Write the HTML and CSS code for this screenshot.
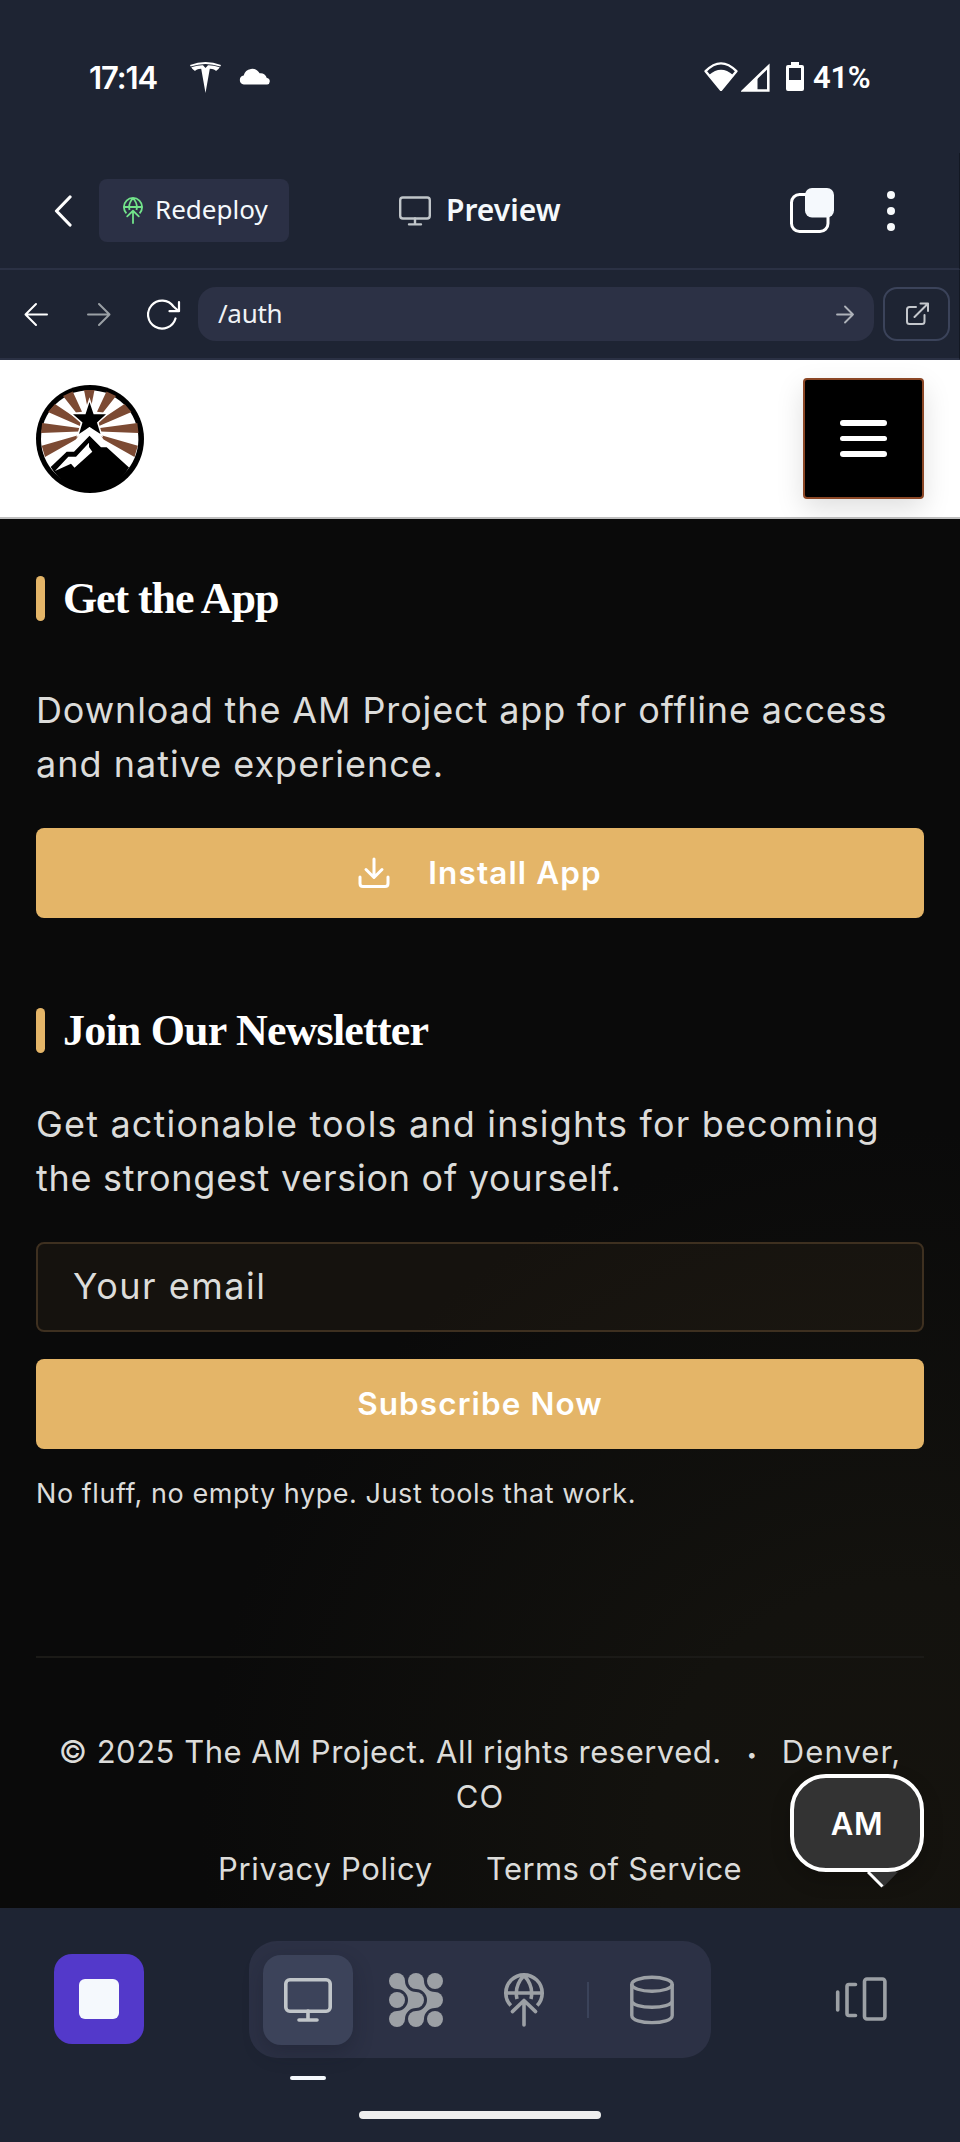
FILE: index.html
```
<!DOCTYPE html>
<html lang="en">
<head>
<meta charset="utf-8">
<title>Preview</title>
<link rel="stylesheet" href="styles.css">
</head>
<body>
<svg width="0" height="0" class="defs" aria-hidden="true">
  <symbol id="globe-up" viewBox="0 0 40 54">
    <g fill="none" stroke="currentColor" stroke-width="3.6" stroke-linecap="round" stroke-linejoin="round">
      <path d="M6.8 32.6A18.2 18.2 0 1 1 33.2 32.6M2.5 20H37.5M20 2.5Q10 13 13 26M20 2.5Q30 13 27 26" stroke-linecap="butt"/>
      <path d="M20 52V27.5M8.4 38.6L20 27.5L31.6 38.6"/>
    </g>
  </symbol>
  <symbol id="monitor" viewBox="0 0 48 44">
    <g fill="none" stroke="currentColor" stroke-linecap="round">
      <rect x="1.8" y="1.8" width="44.4" height="31.4" rx="4"/>
      <path d="M24 33V41M15 42H33"/>
    </g>
  </symbol>
</svg>
<div class="screen">
  <div class="statusbar">
    <div class="status-left">
      <span class="clock">17:14</span>
      <svg class="tesla" width="31" height="31" viewBox="0 0 31 31" fill="#fff"><path d="M0 3Q15.500 -3 31 3L30.300 4.600Q15.500 -.6 .7 4.600Z"/><path d="M1.300 5.300Q8 3 13 3.200L15.500 6L18 3.200Q23 3 29.700 5.300Q28.500 7.800 26 9Q25 7 19.800 6.700L15.500 31L11.200 6.700Q6 7 5 9Q2.500 7.800 1.300 5.300Z"/></svg>
      <svg class="cloud" width="32" height="18" viewBox="0 0 32 18" fill="#fff"><path d="M4.800 17.500A4.600 4.600 0 0 1 4.700 8.400A8.600 8.600 0 0 1 20.600 6.300A6 6 0 0 1 27.800 11A3.300 3.300 0 0 1 28.200 17.500Z"/></svg>
    </div>
    <div class="status-right">
      <svg width="34" height="29" viewBox="0 0 34 29"><path d="M17 28L1.600 9.200Q17 -6.500 32.400 9.200Z" fill="none" stroke="#fff" stroke-width="2.400" stroke-linejoin="round"/><path d="M17 28.500L5 13Q17 2.500 29 13Z" fill="#fff"/></svg>
      <svg class="signal" width="29" height="29" viewBox="0 0 29 29"><path d="M2.500 27.500H27.300V3.500Z" fill="none" stroke="#fff" stroke-width="2.600"/><path d="M2 28L16.500 13.500V28Z" fill="#fff"/></svg>
      <svg class="battery" width="18" height="29" viewBox="0 0 18 29"><path d="M5 0H13V3H16Q18 3 18 5V27Q18 29 16 29H2Q0 29 0 27V5Q0 3 2 3H5Z" fill="#fff"/><rect x="3" y="6" width="12" height="12" fill="#1e2433"/></svg>
      <span class="level">41%</span>
    </div>
  </div>

  <div class="toolbar">
    <svg class="back" width="18" height="32" viewBox="0 0 18 32"><path d="M16 2L2.500 16L16 30" fill="none" stroke="#fff" stroke-width="3.200" stroke-linecap="round" stroke-linejoin="round"/></svg>
    <button class="redeploy"><svg width="20" height="27"><use href="#globe-up"/></svg><span>Redeploy</span></button>
    <div class="title"><svg class="title-icon" width="32" height="30"><use href="#monitor"/></svg><span>Preview</span></div>
    <svg class="tabs" width="45" height="46" viewBox="0 0 45 46"><rect x="1.500" y="6.500" width="36.500" height="37" rx="8" fill="none" stroke="#fff" stroke-width="3"/><rect x="15" y="0" width="29" height="29.500" rx="7" fill="#f5f9fd"/></svg>
    <svg class="dots" width="8" height="40" viewBox="0 0 8 40" fill="#f8fafc"><circle cx="4" cy="4" r="4"/><circle cx="4" cy="20" r="4"/><circle cx="4" cy="36" r="4"/></svg>
  </div>

  <div class="urlbar">
    <svg class="nav-back" width="24" height="25" viewBox="0 0 24 25"><path d="M12 2L1.500 12.500L12 23M1.500 12.500H23" fill="none" stroke="#fff" stroke-width="2"  stroke-linecap="round" stroke-linejoin="round"/></svg>
    <svg class="nav-fwd" width="24" height="25" viewBox="0 0 24 25"><path d="M12 2L22.500 12.500L12 23M1 12.500H22.500" fill="none" stroke="#9aa0a5" stroke-width="2" stroke-linecap="round" stroke-linejoin="round"/></svg>
    <svg class="reload" width="34" height="31" viewBox="0 0 34 31"><path d="M28.500 19.500A14 14 0 1 1 26.500 7.500L31.500 12M32 3V12.200H22.500" fill="none" stroke="#fff" stroke-width="2.200" stroke-linecap="round" stroke-linejoin="round"/></svg>
    <div class="url"><span>/auth</span><svg width="18" height="19" viewBox="0 0 18 19"><path d="M9 1.500L17 9.500L9 17.500M1 9.500H17" fill="none" stroke="#aeb2b9" stroke-width="1.800" stroke-linecap="round" stroke-linejoin="round"/></svg></div>
    <button class="external"><svg width="24" height="24" viewBox="0 0 24 24"><path d="M11 5H4.500Q2 5 2 7.500V19.500Q2 22 4.500 22H17Q19.500 22 19.500 19.500V13M15.500 1.500H23V9M23 1.500L9.500 15" fill="none" stroke="#c4c7cc" stroke-width="2" stroke-linecap="round" stroke-linejoin="round"/></svg></button>
  </div>

  <header class="site-header">
    <svg width="108" height="108" viewBox="0 0 108 108">
      <circle cx="54" cy="54" r="54"/><circle cx="53.700" cy="54" r="48.700" fill="#fff"/>
      <g fill="#7c4a33">
        <path d="M48 5L58.500 5L55.500 20H51Z"/>
        <path d="M27 11L36.700 6.500L46 26.700L40 27.500ZM80 11L70.500 6.500L61 26.700L67 27.500Z"/>
        <path d="M12 27L19 19L45 36.500L44 41ZM95.500 27L88.500 19L62 36.500L63 41Z"/>
        <path d="M5 48L6.200 38L43 43V46.500ZM102.500 48L101.300 38L64 43V46.500Z"/>
        <path d="M9 72L5.700 60.700L43 50L40 54.500ZM98.500 72L101.800 60.700L64.500 50L67.500 54.500Z"/>
      </g>
      <path d="M53.500 17L57.600 29.300H70L61 37.500L64.500 49L53.500 42L43 49L46.500 37.500L37 29.300H49.500Z" stroke="#fff" stroke-width="3" paint-order="stroke"/>
      <path d="M53.500 42L72 59L54 78L35 59Z" fill="#fff"/>
      <path d="M53.500 50.700L65 62.300H70.700L93 82.500Q80 104 54 104Q28 104 14.700 82L30.700 66.700H38Z"/>
      <path d="M53 57.700V62L56.300 66.700L38.500 82.700L35 78.700L19 86L32.300 71.700H40Z" fill="#fff"/>
    </svg>
    <button class="menu" aria-label="Menu"><i></i><i></i><i></i></button>
  </header>

  <main class="page">
    <section class="app">
      <h2 class="heading"><span class="h-app">Get the App</span></h2>
      <p class="copy"><span class="l1">Download the AM Project app for offline access</span><br><span class="l2">and native experience.</span></p>
      <button class="cta install"><svg width="32" height="32" viewBox="0 0 32 32"><path d="M16 2V20M8 12.500L16 20.500L24 12.500M2 20V26.500Q2 29.500 5 29.500H27Q30 29.500 30 26.500V20" fill="none" stroke="#fff" stroke-width="3" stroke-linecap="round" stroke-linejoin="round"/></svg><span>Install App</span></button>
    </section>
    <section class="newsletter">
      <h2 class="heading"><span class="h-news">Join Our Newsletter</span></h2>
      <p class="copy"><span class="l3">Get actionable tools and insights for becoming</span><br><span class="l4">the strongest version of yourself.</span></p>
      <div class="field">Your email</div>
      <button class="cta"><span>Subscribe Now</span></button>
      <p class="note">No fluff, no empty hype. Just tools that work.</p>
    </section>
    <footer class="footer">
      <p class="legal"><span class="copyright">© 2025 The AM Project. All rights reserved.</span><span class="sep">•</span><span class="place">Denver, CO</span></p>
      <div class="links"><a class="privacy">Privacy Policy</a><a class="terms">Terms of Service</a></div>
    </footer>
    <div class="chat"><span>AM</span><svg width="32" height="18" viewBox="0 0 32 18"><path d="M0 0H31L16 15.500Z" fill="#333"/><path d="M1 0L15.500 14.500" stroke="#fff" stroke-width="3"/></svg></div>
  </main>

  <nav class="dock">
    <button class="stop" aria-label="Stop"><i></i></button>
    <div class="pill">
      <div class="tab active"><svg class="tab-monitor" width="48" height="44"><use href="#monitor"/></svg></div>
      <svg class="agent" width="54" height="54" viewBox="0 0 54 54" fill="#9ca0a5">
        <circle cx="8" cy="8" r="8"/><circle cx="27" cy="8" r="8"/><circle cx="46" cy="8" r="8"/>
        <circle cx="8" cy="27" r="8"/><circle cx="27" cy="27" r="8"/><circle cx="46" cy="27" r="8"/>
        <circle cx="8" cy="46" r="8"/><circle cx="27" cy="46" r="8"/><circle cx="46" cy="46" r="8"/>
        <path id="link" d="M16 8A11 11 0 0 0 27 19V27H19A11 11 0 0 0 8 16V8ZM19 27A11 11 0 0 1 8 38V46H16A11 11 0 0 1 27 35V27Z"/>
        <use href="#link" x="19"/>
      </svg>
      <svg class="publish" width="40" height="54"><use href="#globe-up"/></svg>
      <span class="rule"></span>
      <svg class="db" width="44" height="50" viewBox="0 0 44 50" fill="none" stroke="#9ca0a5" stroke-width="3.400"><ellipse cx="22" cy="9.300" rx="20.200" ry="7"/><path d="M1.800 9V40.500C1.800 50 42.200 50 42.200 40.500V9M1.800 25.500C1.800 34.500 42.200 34.500 42.200 25.500"/></svg>
    </div>
    <svg class="devices" width="52" height="44" viewBox="0 0 52 44" fill="none" stroke="#9ca0a5" stroke-width="3.600" stroke-linecap="round"><path d="M2.700 15V33M20.500 7.500H14Q12 7.500 12 9.500V36.500Q12 38.500 14 38.500H20.500"/><rect x="29.500" y="2" width="20.400" height="40" rx="2.500"/></svg>
    <span class="indicator"></span>
    <span class="home"></span>
  </nav>
</div>
</body>
</html>
```
FILE: styles.css
```
* { box-sizing: border-box; }
body { margin: 0; background: #1e2433; font-family: "Inter", sans-serif; }
button { border: 0; padding: 0; margin: 0; font: inherit; color: inherit; background: none; }
svg { display: block; flex: none; }
h2, p { margin: 0; }
.defs { position: absolute; }
.screen { width: 960px; height: 2142px; display: flex; flex-direction: column; background: #1e2433; overflow: hidden; }

.statusbar { height: 153px; display: flex; justify-content: space-between; align-items: flex-start; padding: 62px 89px 0 89px; color: #fff; }
.status-left, .status-right { display: flex; align-items: flex-start; height: 31px; }
.clock, .level { font-size: 31px; line-height: 31px; font-weight: 600; white-space: nowrap; }
.clock { width: 101px; letter-spacing: -1.1px; }
.cloud { margin: 5px 0 0 18px; }
.signal { margin-left: 3px; margin-top: 1px; }
.battery { margin-left: 16px; }
.level { margin-left: 9px; width: 58px; font-family: "Roboto", sans-serif; font-weight: 600; letter-spacing: -0.3px; }

.toolbar { height: 117px; display: flex; align-items: center; border-bottom: 2px solid #2b3144; border-right: 1px solid #131823; padding-left: 54px; }
.redeploy { margin-left: 27px; width: 190px; height: 63px; border-radius: 8px; background: #2b3045; color: #f5f9fc; font: 26px "Noto Sans", sans-serif; display: flex; align-items: center; padding-left: 24px; gap: 12px; }
.redeploy span { padding-bottom: 3px; }
.redeploy svg { color: #72e38a; }
.title { margin-left: 110px; width: 391px; display: flex; align-items: center; gap: 15px; color: #f5f9fc; font: 600 30px "Noto Sans", sans-serif; }
.title-icon { color: #c0c5c9; stroke-width: 3.6; }
.title span { padding-bottom: 2px; }
.dots { margin-left: 52px; }

.urlbar { height: 90px; display: flex; align-items: center; border-bottom: 2px solid #2b3144; border-right: 1px solid #131823; padding-left: 24px; }
.nav-fwd { margin-left: 39px; }
.reload { margin-left: 36px; }
.url { margin-left: 17px; width: 676px; height: 54px; border-radius: 18px; background: #2c3145; display: flex; align-items: center; justify-content: space-between; padding: 0 20px 0 20px; color: #f0f2f5; font: 26px "Noto Sans", sans-serif; }
.url span { padding-bottom: 2px; letter-spacing: -0.3px; }
.external { margin-left: 9px; width: 67px; height: 54px; border: 2px solid #3b435a; border-radius: 14px; display: flex; align-items: center; justify-content: center; }

.site-header { height: 159px; background: #fff; border-bottom: 2px solid #bfbfbf; display: flex; align-items: center; justify-content: space-between; padding: 0 36px; }
.menu { width: 121px; height: 121px; border: 2px solid #8b4726; border-radius: 4px; background: #000; box-shadow: 0 10px 28px rgba(0,0,0,.13); display: flex; flex-direction: column; align-items: center; justify-content: center; gap: 10px; }
.menu i { width: 47px; height: 5.6px; border-radius: 3px; background: #fff; }

.page { position: relative; height: 1389px; padding: 57px 36px 0; color: #dcdcda; background: radial-gradient(ellipse 700px 700px at 900px 1310px, #15130e 0%, #13120e 35%, #0a0a0a 100%) #0a0a0a; }
.heading { height: 45px; display: flex; align-items: center; color: #fff; font: bold 44px/45px "Liberation Serif", serif; white-space: nowrap; }
.heading::before { content: ""; width: 9px; height: 45px; border-radius: 5px; background: #e4b568; margin-right: 18px; }
.h-app { letter-spacing: -1.1px; }
.h-news { letter-spacing: -0.8px; }
.copy { font-size: 36px; line-height: 54px; white-space: nowrap; }
.app .copy { margin-top: 62px; }
.newsletter .copy { margin-top: 44px; }
.l1 { letter-spacing: .88px; }
.l2 { letter-spacing: 1px; }
.l3 { letter-spacing: 1.17px; }
.l4 { letter-spacing: .73px; }
.cta { width: 888px; height: 90px; border-radius: 8px; background: #e4b568; color: #fff; font-size: 31.500px; font-weight: 600; letter-spacing: 1.1px; display: flex; align-items: center; justify-content: center; }
.cta span { padding-bottom: 2px; }
.install { margin-top: 37px; gap: 38px; }
.newsletter { margin-top: 90px; }
.field { margin-top: 37px; height: 90px; border: 2px solid #3e3020; border-radius: 8px; background: rgba(228,181,104,.05); font-size: 36px; line-height: 84px; padding-left: 35px; letter-spacing: 1.5px; }
.field + .cta { margin-top: 27px; }
.note { margin-top: 27px; font-size: 27px; line-height: 35px; letter-spacing: .56px; }
.footer { margin-top: 145px; border-top: 2px solid #1b1a17; padding-top: 71px; font-size: 31px; text-align: center; }
.legal { line-height: 45px; }
.copyright { letter-spacing: .5px; }
.sep { font-size: 18px; margin: 0 25px; vertical-align: 2px; line-height: 1; }
.place { letter-spacing: 1.1px; }
.links { margin-top: 27px; display: flex; justify-content: center; gap: 53px; line-height: 45px; }
.privacy { letter-spacing: .7px; }
.terms { letter-spacing: .4px; }
.chat { position: absolute; left: 790px; top: 1255px; width: 134px; height: 98px; border: 4px solid #fff; border-radius: 36px; background: #333; color: #fff; font-size: 31px; font-weight: 600; letter-spacing: .6px; display: flex; align-items: center; justify-content: center; box-shadow: 0 8px 20px rgba(0,0,0,.2); }
.chat svg { position: absolute; left: 73px; top: 94px; }

.dock { height: 234px; display: grid; grid-template-columns: 54px 90px 105px 462px 124px 52px; grid-template-rows: 150px 18px 4px 31px 8px; align-items: center; }
.stop { grid-column: 2; grid-row: 1; margin-top: 32px; width: 90px; height: 90px; border-radius: 18px; background: #5339ca; display: flex; align-items: center; justify-content: center; }
.stop i { width: 40px; height: 40px; border-radius: 6px; background: #f5f9fd; }
.pill { grid-column: 4; grid-row: 1; align-self: end; height: 117px; border-radius: 28px; background: #2c3145; display: flex; align-items: center; padding-left: 14px; }
.tab { width: 90px; height: 90px; border-radius: 18px; background: #3c435a; box-shadow: 0 8px 20px rgba(20,24,36,.3); display: flex; align-items: center; justify-content: center; }
.tab-monitor { color: #c0c5c9; stroke-width: 3.6; }
.agent { margin-left: 36px; }
.publish { margin-left: 61px; color: #9ca0a5; }
.rule { margin-left: 43px; width: 2px; height: 36px; background: #3b435a; }
.db { margin-left: 41px; }
.devices { grid-column: 6; grid-row: 1; margin-top: 32px; }
.indicator { grid-column: 4; grid-row: 3; width: 36px; height: 4px; margin-left: 41px; border-radius: 2px; background: #f5f9fd; }
.home { grid-column: 4; grid-row: 5; width: 242px; height: 8px; margin-left: 110px; border-radius: 4px; background: #eee; }
```
